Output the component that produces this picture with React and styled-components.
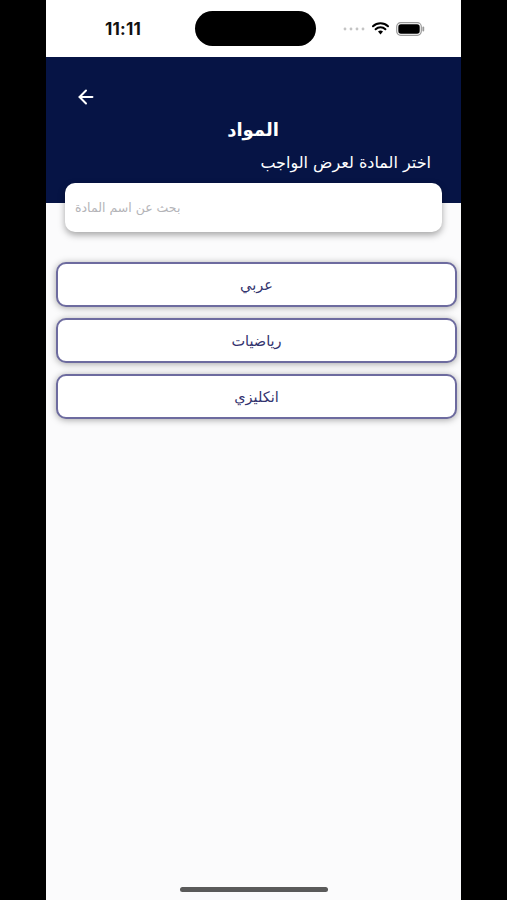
import React from 'react';
import styled, { createGlobalStyle } from 'styled-components';
import { ArrowLeft } from 'lucide-react';

const GlobalStyle = createGlobalStyle`
  html, body {
    margin: 0;
    padding: 0;
    background: #000;
  }
  * {
    box-sizing: border-box;
  }
`;

const Page = styled.div`
  display: flex;
  justify-content: center;
  width: 507px;
  height: 900px;
  background: #000;
`;

const Screen = styled.div`
  display: flex;
  flex-direction: column;
  width: 415px;
  height: 900px;
  background: #fbfbfc;
  overflow: hidden;
`;

const StatusBar = styled.div`
  display: flex;
  align-items: center;
  height: 57px;
  padding: 0 36px 0 59px;
  background: #fff;
  font-family: Inter, 'Liberation Sans', sans-serif;
`;

const Time = styled.span`
  width: 90px;
  font-size: 17px;
  font-weight: 700;
  color: #111;
  letter-spacing: 0.2px;
`;

const Island = styled.div`
  width: 121px;
  height: 35px;
  border-radius: 18px;
  background: #000;
`;

const StatusIcons = styled.div`
  display: flex;
  align-items: center;
  gap: 7px;
  margin-left: auto;
`;

const Header = styled.div`
  display: flex;
  flex-direction: column;
  height: 146px;
  padding: 29px 30px 0 29px;
  background: #061445;
  color: #fff;
  font-family: 'DejaVu Sans', 'Noto Sans', sans-serif;
`;

const BackButton = styled.button`
  display: flex;
  align-items: center;
  width: 22px;
  height: 22px;
  padding: 0;
  border: none;
  background: none;
  color: #fff;
  cursor: pointer;
`;

const Title = styled.h1`
  margin: 10px 0 0;
  text-align: center;
  font-size: 18px;
  font-weight: 700;
  line-height: 24px;
`;

const Subtitle = styled.p`
  margin: 10px 0 0;
  direction: rtl;
  text-align: right;
  font-size: 16px;
  line-height: 21px;
`;

const SearchBox = styled.input`
  display: block;
  width: 377px;
  height: 49px;
  margin: -20px 0 0 19px;
  padding: 0 10px;
  border: none;
  border-radius: 10px;
  background: #fff;
  box-shadow: 0 3px 7px rgba(0, 0, 0, 0.35);
  font-family: 'DejaVu Sans', 'Noto Sans', sans-serif;
  font-size: 12.5px;
  color: #333;
  outline: none;

  &::placeholder {
    color: #b4b4b8;
  }
`;

const SubjectList = styled.div`
  display: flex;
  flex-direction: column;
  gap: 11px;
  margin: 30px 4px 0 10px;
`;

const SubjectButton = styled.button`
  height: 45px;
  border: 2px solid #6d6b9f;
  border-radius: 10px;
  background: #fff;
  box-shadow: 0 1px 7px rgba(0, 0, 0, 0.35);
  font-family: 'DejaVu Sans', 'Noto Sans', sans-serif;
  font-size: 14.5px;
  color: #33336e;
  cursor: pointer;
`;

const Spacer = styled.div`
  flex: 1;
`;

const HomeBar = styled.div`
  align-self: center;
  width: 148px;
  height: 5px;
  margin-bottom: 8px;
  border-radius: 3px;
  background: #5a5a5a;
`;

const SignalDots = () => (
  <svg width="22" height="4" viewBox="0 0 22 4">
    {[2, 8, 14, 20].map((x) => (
      <circle key={x} cx={x} cy="2" r="1.4" fill="#c4c4c4" />
    ))}
  </svg>
);

const Wifi = () => (
  <svg width="17" height="13" viewBox="0 0 17 13">
    <path d="M8.5 12.5 L6 9.6 A3.6 3.6 0 0 1 11 9.6 Z" fill="#000" />
    <path d="M3.6 7.2 A7 7 0 0 1 13.4 7.2" stroke="#000" strokeWidth="2" fill="none" strokeLinecap="round" />
    <path d="M1 4.2 A10.8 10.8 0 0 1 16 4.2" stroke="#000" strokeWidth="2" fill="none" strokeLinecap="round" />
  </svg>
);

const Battery = () => (
  <svg width="29" height="14" viewBox="0 0 29 14">
    <rect x="0.7" y="0.7" width="24.6" height="12.6" rx="4" fill="none" stroke="#9a9a9a" strokeWidth="1.2" />
    <rect x="2.3" y="2.3" width="21.4" height="9.4" rx="2.6" fill="#000" />
    <rect x="26.4" y="4.6" width="1.8" height="4.8" rx="0.9" fill="#9a9a9a" />
  </svg>
);

const subjects = ['عربي', 'رياضيات', 'انكليزي'];

const App = () => (
  <Page>
    <GlobalStyle />
    <Screen>
      <StatusBar>
        <Time>11:11</Time>
        <Island />
        <StatusIcons>
          <SignalDots />
          <Wifi />
          <Battery />
        </StatusIcons>
      </StatusBar>
      <Header>
        <BackButton title="رجوع">
          <ArrowLeft size={22} strokeWidth={2.2} />
        </BackButton>
        <Title>المواد</Title>
        <Subtitle>اختر المادة لعرض الواجب</Subtitle>
      </Header>
      <SearchBox placeholder="بحث عن اسم المادة" />
      <SubjectList>
        {subjects.map((s) => (
          <SubjectButton key={s}>{s}</SubjectButton>
        ))}
      </SubjectList>
      <Spacer />
      <HomeBar />
    </Screen>
  </Page>
);

export default App;
